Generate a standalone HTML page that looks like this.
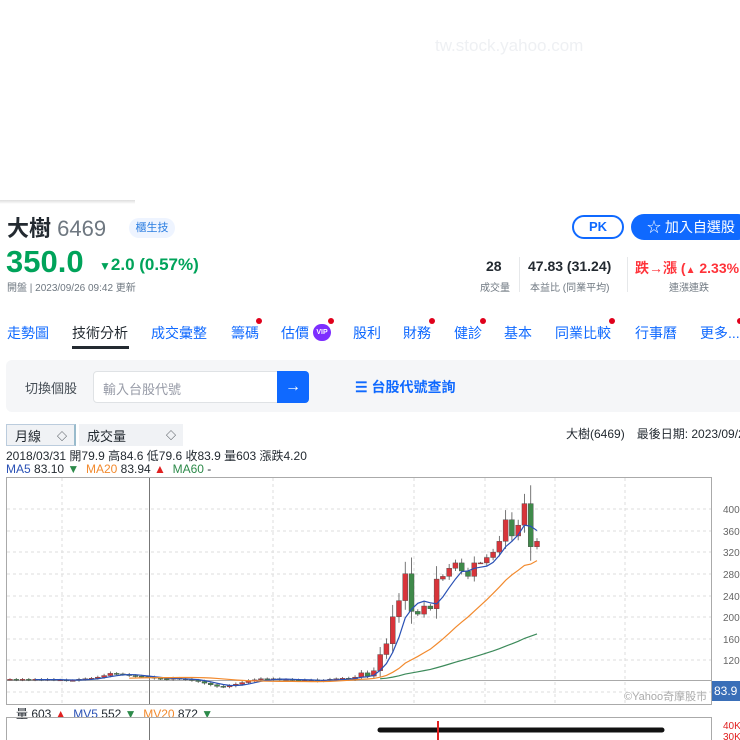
<!DOCTYPE html>
<html><head><meta charset="utf-8"><style>
*{margin:0;padding:0;box-sizing:border-box}
body{width:740px;height:740px;overflow:hidden;background:#fff;font-family:"Liberation Sans","Noto Sans CJK TC",sans-serif;position:relative;color:#232a31}
.a{position:absolute;white-space:nowrap}
.tab{position:absolute;top:323px;font-size:14px;color:#0f69ff;white-space:nowrap}
.dot{position:absolute;width:6px;height:6px;border-radius:3px;background:#e0001b}
</style></head><body>
<div class="a" style="left:435px;top:36px;font-size:17px;color:#eef0f3">tw.stock.yahoo.com</div>
<div class="a" style="left:0;top:200px;width:135px;height:4px;background:linear-gradient(#ddd,#fff)"></div>

<div class="a" style="left:7px;top:211px;font-size:22px;font-weight:bold;color:#232a31">大樹 <span style="font-weight:normal;color:#6e7780">6469</span></div>
<div class="a" style="left:129px;top:218px;width:46px;height:20px;border-radius:10px;background:#eef4ff;color:#2a7de1;font-size:11px;text-align:center;line-height:20px">櫃生技</div>
<div class="a" style="left:572px;top:215px;width:52px;height:24px;border:2px solid #0f69ff;border-radius:12px;color:#0f69ff;font-size:13px;font-weight:bold;text-align:center;line-height:20px">PK</div>
<div class="a" style="left:631px;top:214px;width:120px;height:26px;background:#0f69ff;border-radius:13px;color:#fff;font-size:14px;line-height:26px;padding-left:16px">☆ 加入自選股</div>

<div class="a" style="left:6px;top:244px;font-size:31px;font-weight:bold;color:#00a35a">350.0</div>
<div class="a" style="left:99px;top:255px;font-size:17px;font-weight:bold;color:#00a35a"><span style="font-size:12px">▼</span>2.0 (0.57%)</div>
<div class="a" style="left:7px;top:279px;font-size:10px;color:#6e7780">開盤 | 2023/09/26 09:42 更新</div>

<div class="a" style="left:486px;top:258px;font-size:14px;font-weight:bold">28</div>
<div class="a" style="left:480px;top:279px;font-size:10px;color:#6e7780">成交量</div>
<div class="a" style="left:519px;top:257px;width:1px;height:35px;background:#e6e8ea"></div>
<div class="a" style="left:528px;top:258px;font-size:14px;font-weight:bold">47.83 (31.24)</div>
<div class="a" style="left:530px;top:279px;font-size:10px;color:#6e7780">本益比 (同業平均)</div>
<div class="a" style="left:627px;top:257px;width:1px;height:35px;background:#e6e8ea"></div>
<div class="a" style="left:635px;top:258px;font-size:14px;font-weight:bold;color:#ff333a">跌→漲 (<span style="font-size:10px">▲</span> 2.33%</div>
<div class="a" style="left:669px;top:279px;font-size:10px;color:#6e7780">連漲連跌</div>

<div class="tab" style="left:7px">走勢圖</div>
<div class="tab" style="left:72px;color:#232a31">技術分析</div>
<div class="a" style="left:72px;top:346px;width:57px;height:3px;background:#232a31"></div>
<div class="tab" style="left:151px">成交彙整</div>
<div class="tab" style="left:231px">籌碼</div><div class="dot" style="left:256px;top:318px"></div>
<div class="tab" style="left:281px">估價</div><div class="dot" style="left:328px;top:318px"></div>
<div class="a" style="left:313px;top:324px;width:18px;height:17px;border-radius:9px;background:#7d2eff;color:#fff;font-size:7px;font-weight:bold;text-align:center;line-height:17px">VIP</div>
<div class="tab" style="left:353px">股利</div>
<div class="tab" style="left:403px">財務</div><div class="dot" style="left:429px;top:318px"></div>
<div class="tab" style="left:454px">健診</div><div class="dot" style="left:480px;top:318px"></div>
<div class="tab" style="left:504px">基本</div>
<div class="tab" style="left:555px">同業比較</div><div class="dot" style="left:609px;top:318px"></div>
<div class="tab" style="left:635px">行事曆</div>
<div class="tab" style="left:700px">更多...</div><div class="dot" style="left:737px;top:318px"></div>

<div class="a" style="left:6px;top:360px;width:740px;height:52px;background:#f5f6f8;border-radius:6px"></div>
<div class="a" style="left:25px;top:378px;font-size:13px;color:#464e56">切換個股</div>
<div class="a" style="left:93px;top:371px;width:185px;height:32px;background:#fff;border:1px solid #dfe2e5;border-radius:4px 0 0 4px;font-size:13px;color:#979ba7;padding:7px 9px">輸入台股代號</div>
<div class="a" style="left:277px;top:371px;width:32px;height:32px;background:#0f69ff;border-radius:0 4px 4px 0;color:#fff;font-size:16px;text-align:center;line-height:31px">→</div>
<div class="a" style="left:355px;top:377px;font-size:14px;font-weight:bold;color:#0f69ff">☰ 台股代號查詢</div>

<div class="a" style="left:6px;top:424px;width:70px;height:22px;background:#f0f2f5;border:1px solid #bcd;border-right:2px solid #9bc;font-size:13px;padding:1px 8px">月線<span style="position:absolute;right:7px;font-size:10px;top:3px">◇</span></div>
<div class="a" style="left:79px;top:424px;width:104px;height:22px;background:#f0f2f5;font-size:13px;padding:2px 8px">成交量<span style="position:absolute;right:7px;font-size:10px;top:3px">◇</span></div>
<div class="a" style="left:566px;top:425px;font-size:12px">大樹(6469)　最後日期: 2023/09/2</div>
<div class="a" style="left:6px;top:447px;font-size:12px">2018/03/31 開79.9 高84.6 低79.6 收83.9 量603 漲跌4.20</div>
<div class="a" style="left:6px;top:462px;font-size:12px"><span style="color:#2a51b5">MA5</span> 83.10 <span style="color:#2d8a4a">▼</span>&nbsp; <span style="color:#f28a2e">MA20</span> 83.94 <span style="color:#e02020">▲</span>&nbsp; <span style="color:#2d8a4a">MA60</span> -</div>
<div class="a" style="left:16px;top:705px;font-size:12px">量 603 <span style="color:#e02020">▲</span>&nbsp; <span style="color:#2a51b5">MV5</span> 552 <span style="color:#2d8a4a">▼</span>&nbsp; <span style="color:#f28a2e">MV20</span> 872 <span style="color:#2d8a4a">▼</span></div>

<svg class="a" style="left:0;top:0" width="740" height="740" id="s">
<g stroke="#ddd" stroke-dasharray="3,3" stroke-width="1">
<line x1="7" x2="711" y1="509" y2="509"/><line x1="7" x2="711" y1="531" y2="531"/><line x1="7" x2="711" y1="552" y2="552"/><line x1="7" x2="711" y1="574" y2="574"/><line x1="7" x2="711" y1="596" y2="596"/><line x1="7" x2="711" y1="617" y2="617"/><line x1="7" x2="711" y1="639" y2="639"/><line x1="7" x2="711" y1="660" y2="660"/><line x1="7" x2="711" y1="692" y2="692"/>
<line x1="62" x2="62" y1="478" y2="704"/><line x1="273" x2="273" y1="478" y2="704"/><line x1="414" x2="414" y1="478" y2="704"/><line x1="485" x2="485" y1="478" y2="704"/><line x1="555" x2="555" y1="478" y2="704"/><line x1="625" x2="625" y1="478" y2="704"/>
</g>
<rect x="6.5" y="477.5" width="705" height="227" fill="none" stroke="#aaa"/>
<line x1="7" x2="711" y1="680.5" y2="680.5" stroke="#aaa"/>
<line x1="149.5" x2="149.5" y1="478" y2="704" stroke="#777"/>
<rect x="6.5" y="717.5" width="705" height="30" fill="none" stroke="#aaa"/>
<line x1="149.5" x2="149.5" y1="718" y2="740" stroke="#777"/>
<g font-size="10" fill="#666" font-family="Liberation Sans">
<text x="723" y="513">400</text><text x="723" y="535">360</text><text x="723" y="556">320</text><text x="723" y="578">280</text><text x="723" y="600">240</text><text x="723" y="621">200</text><text x="723" y="643">160</text><text x="723" y="664">120</text>
<text x="723" y="729" fill="#e02020">40K</text><text x="723" y="740" fill="#e02020">30K</text></g>
<rect x="712" y="681" width="30" height="20" fill="#3a6fb8"/>
<text x="714" y="695" font-size="12" fill="#fff" font-family="Liberation Sans">83.9</text>
<text x="624" y="700" font-size="11" fill="#aaa" font-family="Liberation Sans,Noto Sans CJK TC">©Yahoo奇摩股市</text>
<g id="c"></g>
<line x1="380" x2="662" y1="730" y2="730" stroke="#111" stroke-width="5" stroke-linecap="round"/>
<line x1="438" x2="438" y1="721" y2="740" stroke="#e02020" stroke-width="2"/>
</svg>
<script>
var cl=[84,83,84,83,84,83,84,83,83,82,82,84,85,86,88,91,95,94,93,91,90,89,88,86,85,84,86,85,84,82,80,77,74,71,70,72,75,78,81,83,85,84,85,84,84,83,82,83,83,81,82,84,85,86,84,88,96,90,100,130,150,200,230,280,210,205,220,215,270,275,290,300,285,275,300,300,310,320,340,380,350,370,410,330,340];
var step=(537-10)/(cl.length-1);
function Y(p){return 509+(400-p)*0.539;}
var g=document.getElementById('c'),h='',o=84;
for(var i=0;i<cl.length;i++){var c=cl[i],x=10+i*step,up=c>=o,col=up?'#d8343a':'#3f8a4a';
var hi=Math.max(o,c)+Math.abs(c-o)*0.4+2,lo=Math.min(o,c)-Math.abs(c-o)*0.3-2;
h+='<line x1="'+x+'" x2="'+x+'" y1="'+Y(hi)+'" y2="'+Y(lo)+'" stroke="#555" stroke-width="0.8"/>';
var t=Y(Math.max(o,c)),b=Y(Math.min(o,c));h+='<rect x="'+(x-2.5)+'" y="'+t+'" width="5" height="'+Math.max(1,b-t)+'" fill="'+col+'" stroke="#444" stroke-width="0.4"/>';o=c;}
function ma(n,col){var p='';for(var i=n-1;i<cl.length;i++){var s=0;for(var j=i-n+1;j<=i;j++)s+=cl[j];p+=(10+i*step)+','+Y(s/n)+' ';}h+='<polyline points="'+p+'" fill="none" stroke="'+col+'" stroke-width="1.2"/>';}
ma(5,'#2a51b5');ma(20,'#f28a2e');ma(60,'#3c8a5a');
g.innerHTML=h;
</script>
</body></html>
